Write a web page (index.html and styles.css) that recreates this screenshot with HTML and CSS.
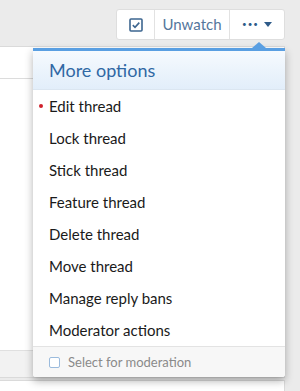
FILE: index.html
```html
<!DOCTYPE html>
<html>

<head>
  <meta charset="utf-8" />
  <title>Thread tools</title>
  <meta name="viewport" content="width=device-width, initial-scale=1">
  <link rel="stylesheet" href="styles.css">
</head>

<body>
  <div class="page">
    <div class="actions">
      <div class="button-group">
        <button class="button check" title="Select"><svg width="14" height="14" viewBox="0 0 14 14"><rect x="1" y="1" width="12" height="12" rx="1" fill="none" stroke="currentColor" stroke-width="1.6"/><path d="M3.8 7.2 L6 9.3 L10.3 4.6" fill="none" stroke="currentColor" stroke-width="1.6"/></svg></button>
        <button class="button watch">Unwatch</button>
        <button class="button more"><span class="dots">&bull;&bull;&bull;</span><i class="caret"></i></button>
      </div>
    </div>

    <div class="block">
      <div class="block-tabs"></div>
      <div class="block-body"></div>
      <div class="block-footer"></div>
    </div>
    <div class="block next"></div>

    <div class="menu">
      <div class="menu-arrow"></div>
      <div class="menu-content">
        <h3 class="menu-header">More options</h3>
        <ul class="menu-list">
          <li class="edit"><a href="#">Edit thread</a></li>
          <li><a href="#">Lock thread</a></li>
          <li><a href="#">Stick thread</a></li>
          <li><a href="#">Feature thread</a></li>
          <li><a href="#">Delete thread</a></li>
          <li><a href="#">Move thread</a></li>
          <li><a href="#">Manage reply bans</a></li>
          <li><a href="#">Moderator actions</a></li>
        </ul>
        <div class="menu-footer">
          <label><i class="box"></i>Select for moderation</label>
        </div>
      </div>
    </div>
  </div>
</body>

</html>
```

FILE: styles.css
```css
* {
  margin: 0;
  padding: 0;
  box-sizing: border-box;
}

body {
  background: #ebebeb;
  font: 15px/1.4 Lato, 'Noto Sans', sans-serif;
  color: #1a1a1a;
  overflow: hidden;
}

a {
  color: inherit;
  text-decoration: none;
}

ul {
  list-style: none;
}

.page {
  position: relative;
  padding: 9px 15px 0 0;
}

/* top buttons */
.actions {
  display: flex;
  justify-content: flex-end;
}
.button-group {
  display: flex;
  height: 31px;
  background: #fff;
  border: 1px solid #dedede;
  border-radius: 3px;
}
.button {
  display: flex;
  align-items: center;
  justify-content: center;
  height: 100%;
  border: 0;
  border-left: 1px solid #e2e2e2;
  background: none;
  font: inherit;
  font-size: 15px;
  color: #54769c;
}
.button:first-child {
  border-left: 0;
}
.button.check {
  width: 37px;
  color: #3d6690;
}
.button.watch {
  width: 75px;
}
.button.more {
  width: 55px;
  gap: 5px;
  color: #2e5b89;
}
.button .dots {
  font-size: 8px;
  letter-spacing: 1px;
}
.button .caret {
  width: 0;
  height: 0;
  border-left: 4px solid transparent;
  border-right: 4px solid transparent;
  border-top: 5px solid currentColor;
}

/* page block behind menu */
.block {
  margin-top: 6px;
  background: #fff;
  border: 1px solid #dadada;
  border-left: 0;
}
.block-tabs {
  height: 32px;
  border-bottom: 1px solid #dcdcdc;
}
.block-body {
  height: 271px;
}
.block-footer {
  height: 27px;
  background: #f2f2f2;
  border-top: 1px solid #e0e0e0;
}
.block.next {
  margin-top: 2px;
  height: 40px;
}

/* more options menu */
.menu {
  position: absolute;
  left: 33px;
  top: 42px;
  width: 252px;
}
.menu-arrow {
  position: absolute;
  top: 0;
  right: 19px;
  width: 0;
  height: 0;
  border-left: 7px solid transparent;
  border-right: 7px solid transparent;
  border-bottom: 6px solid #5a9fe2;
}
.menu-content {
  margin-top: 6px;
  background: #fff;
  border-top: 3px solid #5a9fe2;
  border-radius: 0 0 3px 3px;
  box-shadow: 0 4px 9px rgba(0, 0, 0, .3);
}
.menu-header {
  height: 39px;
  padding: 7px 16px 0;
  background: linear-gradient(to bottom, #f6fafe, #e2eefa);
  border-bottom: 1px solid #dbe6f1;
  font-size: 18px;
  font-weight: normal;
  color: #3068a4;
}
.menu-list li a {
  position: relative;
  display: block;
  height: 32px;
  padding: 6px 16px 0;
}
.menu-list li.edit a:before {
  content: '';
  position: absolute;
  left: 6px;
  top: 14px;
  width: 4px;
  height: 4px;
  border-radius: 50%;
  background: #d0202b;
}
.menu-footer {
  height: 31px;
  padding: 6px 16px 0;
  background: #f7f7f7;
  border-top: 1px solid #e3e3e3;
  border-radius: 0 0 3px 3px;
  font-size: 13px;
  color: #8a8a8a;
}
.menu-footer label {
  display: flex;
  align-items: center;
  gap: 8px;
}
.menu-footer .box {
  width: 11px;
  height: 11px;
  background: #fff;
  border: 1px solid #9bbbdd;
  border-radius: 2px;
}
```
